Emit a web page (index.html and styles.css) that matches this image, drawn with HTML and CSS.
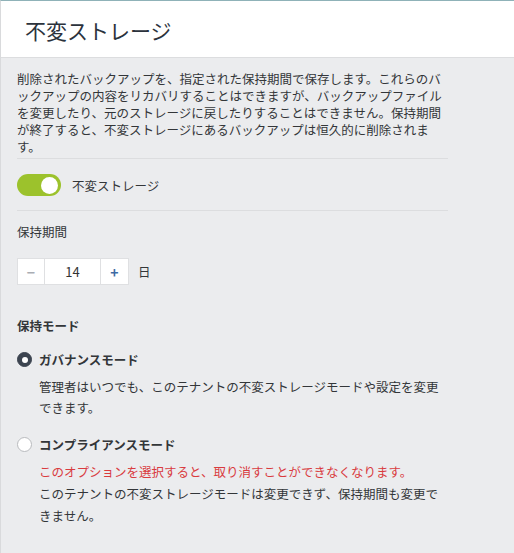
FILE: index.html
```html
<!DOCTYPE html>
<html lang="ja">
<head>
<meta charset="utf-8">
<link rel="stylesheet" href="styles.css">
</head>
<body>
<div class="panel">
  <header class="head"><h1 class="title">不変ストレージ</h1></header>
  <div class="body">
    <p class="desc sep">削除されたバックアップを、指定された保持期間で保存します。これらのバックアップの内容をリカバリすることはできますが、バックアップファイルを変更したり、元のストレージに戻したりすることはできません。保持期間が終了すると、不変ストレージにあるバックアップは恒久的に削除されます。</p>
    <div class="toggle-row sep">
      <span class="switch"><span class="knob"></span></span>
      <span class="toggle-label">不変ストレージ</span>
    </div>
    <div class="field-label">保持期間</div>
    <div class="stepper-row">
      <div class="stepper">
        <span class="step minus">−</span>
        <span class="value">14</span>
        <span class="step plus">+</span>
      </div>
      <span class="unit">日</span>
    </div>
    <div class="mode-title">保持モード</div>
    <div class="radio-row first">
      <span class="radio checked"><span class="dot"></span></span>
      <span class="radio-label">ガバナンスモード</span>
    </div>
    <div class="radio-desc">
      <p>管理者はいつでも、このテナントの不変ストレージモードや設定を変更できます。</p>
    </div>
    <div class="radio-row second">
      <span class="radio"></span>
      <span class="radio-label">コンプライアンスモード</span>
    </div>
    <div class="radio-desc wide">
      <p class="warn">このオプションを選択すると、取り消すことができなくなります。</p>
      <p>このテナントの不変ストレージモードは変更できず、保持期間も変更できません。</p>
    </div>
  </div>
</div>
</body>
</html>
```

FILE: styles.css
```css
html, body {
  margin: 0;
  padding: 0;
}
body {
  font-family: "Noto Sans CJK JP", "Noto Sans", sans-serif;
  color: #333639;
  background: #ebecee;
}
.panel {
  box-sizing: border-box;
  width: 514px;
  height: 553px;
  border-top: 1px solid #8fb2b8;
  border-left: 1px solid #d9dadc;
  background: #ebecee;
  overflow: hidden;
}
.head {
  box-sizing: border-box;
  height: 57px;
  background: #ffffff;
  border-bottom: 1px solid #dcdddf;
  display: flex;
  align-items: center;
  padding-left: 24px;
}
.title {
  margin: 0;
  font-size: 21px;
  font-weight: 400;
  color: #2b323c;
  line-height: 1;
  padding-top: 2px;
}
.body {
  width: 431px;
  padding: 12px 0 0 16px;
  font-size: 12.5px;
}
.sep {
  border-bottom: 1px solid #dcdddf;
}
.desc {
  margin: 0;
  line-height: 17px;
  padding-bottom: 3px;
}
.toggle-row {
  display: flex;
  align-items: center;
  padding: 15px 0 14px;
}
.switch {
  box-sizing: border-box;
  width: 44px;
  height: 22px;
  border-radius: 11px;
  background: #9cc22c;
  display: flex;
  justify-content: flex-end;
  align-items: center;
  padding-right: 3px;
}
.knob {
  width: 17px;
  height: 17px;
  border-radius: 50%;
  background: #ffffff;
}
.toggle-label {
  margin-left: 11px;
  line-height: 17px;
}
.field-label {
  line-height: 17px;
  margin-top: 12px;
}
.stepper-row {
  display: flex;
  align-items: center;
  margin-top: 18px;
}
.stepper {
  display: flex;
  height: 27px;
  box-sizing: border-box;
  border: 1px solid #dfe0e2;
  background: #dfe0e2;
  gap: 1px;
}
.step, .value {
  background: #ffffff;
  display: flex;
  align-items: center;
  justify-content: center;
}
.step {
  width: 26px;
  font-weight: 700;
  font-size: 14px;
}
.minus {
  color: #a9adb3;
}
.plus {
  width: 27px;
  color: #3d6aa3;
}
.value {
  width: 55px;
  font-size: 13px;
  color: #333;
}
.unit {
  margin-left: 9px;
}
.mode-title {
  margin-top: 32px;
  line-height: 17px;
  font-weight: 700;
}
.radio-row {
  display: flex;
  align-items: center;
  height: 21px;
}
.radio-row.first {
  margin-top: 15px;
}
.radio-row.second {
  margin-top: 16px;
}
.radio {
  box-sizing: border-box;
  width: 15px;
  height: 15px;
  border-radius: 50%;
  background: #ffffff;
  border: 1px solid #b9bbbe;
  display: flex;
  align-items: center;
  justify-content: center;
}
.radio.checked {
  background: #3c4450;
  border-color: #3c4450;
}
.dot {
  width: 6px;
  height: 6px;
  border-radius: 50%;
  background: #ffffff;
}
.radio-label {
  margin-left: 7px;
  font-weight: 700;
  line-height: 17px;
}
.radio-desc {
  margin-left: 22px;
  margin-top: 6px;
}
.radio-desc p {
  margin: 0;
  line-height: 21px;
}
.radio-desc.wide p {
  line-height: 22px;
}
.warn {
  color: #d93b3f;
}
```
